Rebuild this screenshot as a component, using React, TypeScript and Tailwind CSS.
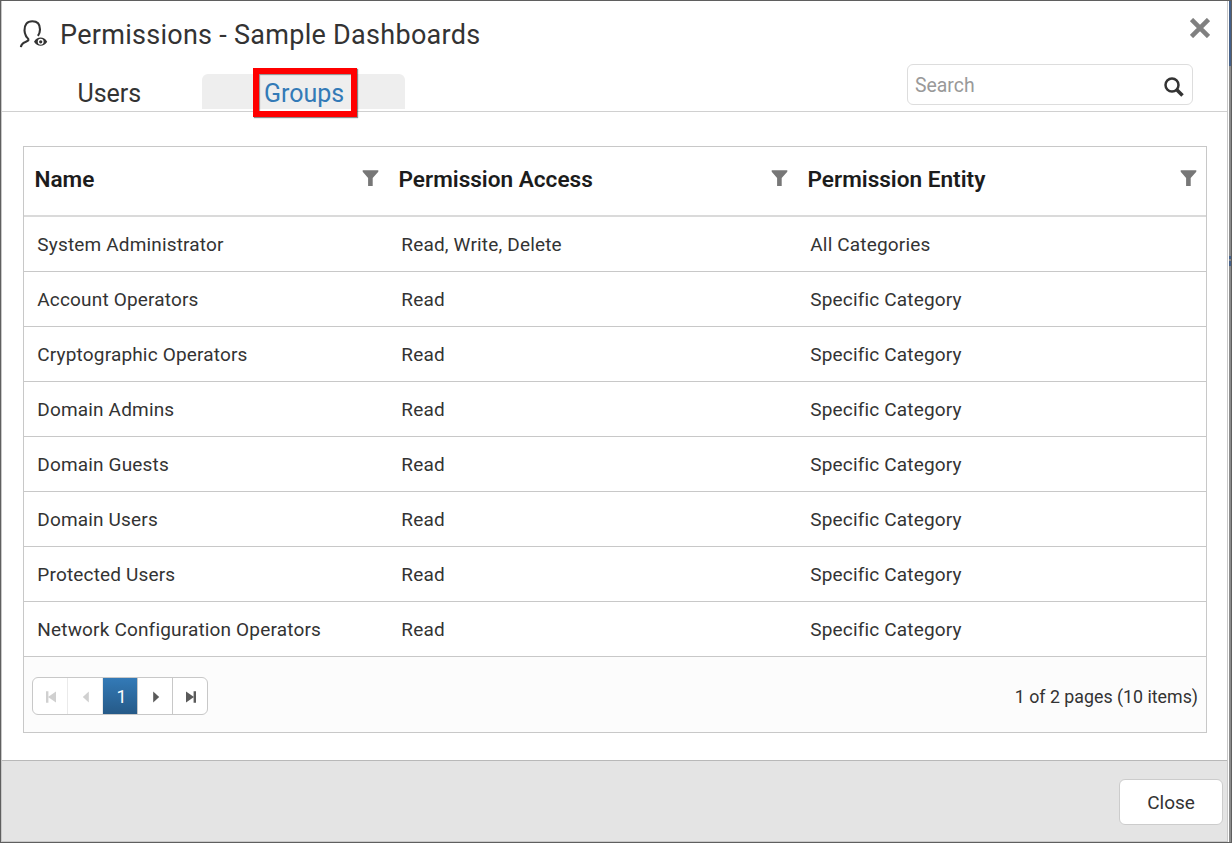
import React from "react";

const rows: [string, string, string][] = [
  ["System Administrator", "Read, Write, Delete", "All Categories"],
  ["Account Operators", "Read", "Specific Category"],
  ["Cryptographic Operators", "Read", "Specific Category"],
  ["Domain Admins", "Read", "Specific Category"],
  ["Domain Guests", "Read", "Specific Category"],
  ["Domain Users", "Read", "Specific Category"],
  ["Protected Users", "Read", "Specific Category"],
  ["Network Configuration Operators", "Read", "Specific Category"],
];

const headers = ["Name", "Permission Access", "Permission Entity"];

function UserEyeIcon() {
  return (
    <svg width="30" height="30" viewBox="0 0 30 30" fill="none" stroke="#333" strokeWidth="2.100">
      <path d="M1.900 28.200c.3-3.200 1.700-4.300 4.600-5.300 2.400-.8 3.300-1.300 2.900-2.600-.3-1.100-1.700-1.700-2.400-3.300-.7-1.500-1.500-3.500-1.500-5.500C5.500 5.500 8 2.300 13.300 2.300s7.700 2.900 7.700 8.200c0 2.400-.8 4.600-2.100 6.400" />
      <path d="M15 22.800c3.200-5.600 10-5.600 13.200 0-3.200 5.400-10 5.400-13.200 0Z" fill="#333" stroke="none" />
      <circle cx="21.700" cy="22.800" r="2.300" stroke="#fff" strokeWidth="1.300" />
    </svg>
  );
}

function FilterIcon() {
  return (
    <svg width="17" height="17" viewBox="0 0 17 17" fill="#777">
      <path d="M.7.3h15.600v1.500L10.700 8v8H6.100V8L.7 1.800Z" />
    </svg>
  );
}

function Arrow({ kind, color }: { kind: "first" | "prev" | "next" | "last"; color: string }) {
  const back = kind === "first" || kind === "prev";
  const bar = kind === "first" || kind === "last";
  return (
    <svg width="12" height="12" viewBox="0 0 12 12" fill={color} className={back ? "mt-[2px] ml-[2px]" : "mt-[2px] ml-[2px] rotate-180"}>
      {bar && <path d="M1 .3h2.400v11.400H1z" />}
      <path d={bar ? "M11 .5v11L3 6Z" : "M8.800.5v11L2.800 6Z"} />
    </svg>
  );
}

export default function App() {
  return (
    <div className="flex h-[843px] w-[1232px] overflow-hidden border border-[#5f5f5f] bg-white font-['Roboto',sans-serif] text-[#333]">
      <div className="flex w-[1227px] flex-col border-x border-b border-[#c8c8c8]">
        <header className="flex h-[111px] shrink-0 justify-between border-b border-[#d0d0d0]">
          <div>
            <div className="flex h-[73px] items-start pt-[18px] pl-[17px]">
              <UserEyeIcon />
              <h1 className="ml-[11px] text-[27px] leading-[32px] tracking-[0.280px]">Permissions - Sample Dashboards</h1>
            </div>
            <nav className="flex h-[35px] text-[25px] leading-[39px]">
              <div className="w-[200px] pl-[75.500px]">Users</div>
              <div className="relative w-[203px] rounded-t-[6px] bg-[#eee] pl-[62px] text-[#337ab7]">
                Groups
                <span className="absolute -top-[6px] left-[51px] h-[49px] w-[104px] border-[6px] border-[#ff0000] shadow-[1px_1px_1px_rgba(0,0,0,0.45),inset_1px_1px_1px_rgba(0,0,0,0.4)]" />
              </div>
            </nav>
          </div>
          <div className="pr-[34px]">
            <div className="flex h-[63px] justify-end pt-[17px]">
              <svg width="20" height="20" viewBox="0 0 20 20" stroke="#808080" strokeWidth="4.600" className="-mr-[17px]">
                <path d="M1.500 1.500l17 17M18.500 1.500l-17 17" />
              </svg>
            </div>
            <div className="flex h-[41px] w-[286px] items-center justify-between rounded-[6px] border border-[#ddd] pr-2 pl-[7px] text-[19.400px] text-[#999]">
              <span className="pt-[3px]">Search</span>
              <svg width="20" height="20" viewBox="0 0 20 20" fill="none" stroke="#333" className="mt-1">
                <circle cx="8" cy="8" r="6.500" strokeWidth="2.500" />
                <path d="M12.500 12.500l6 6" strokeWidth="3.500" />
              </svg>
            </div>
          </div>
        </header>

        <main className="flex-1 pt-[34px] pl-[21px]">
          <div className="h-[587px] w-[1184px] border border-[#c8c8c8]">
            <div className="grid h-[70px] grid-cols-[364px_409px_409px] border-b-2 border-[#dadada]">
              {headers.map((h) => (
                <div key={h} className="flex items-center justify-between pr-[9px] pb-[6px] pl-[10.500px] text-[22.600px] font-semibold text-[#1c1c1c]">
                  <span className="pt-[3px]">{h}</span>
                  <FilterIcon />
                </div>
              ))}
            </div>
            {rows.map((r) => (
              <div key={r[0]} className="grid h-[55px] grid-cols-[364px_409px_409px] items-center border-b border-[#c8c8c8] pt-[2px] text-[19px] tracking-[0.170px]">
                {r.map((c) => (
                  <span key={c} className="pl-[13.300px]">{c}</span>
                ))}
              </div>
            ))}
            <div className="flex h-[75px] items-start justify-between bg-[#fcfcfc] pt-5 pr-2 pl-2">
              <div className="flex h-[38px] w-[176px] overflow-hidden rounded-[6px] border border-[#c8c8c8] bg-white">
                <div className="flex w-[35px] items-center justify-center border-r border-[#eaeaea]"><Arrow kind="first" color="#d0d0d0" /></div>
                <div className="flex w-[35px] items-center justify-center border-r border-[#eaeaea]"><Arrow kind="prev" color="#d0d0d0" /></div>
                <div className="flex w-[34px] items-center justify-center bg-linear-to-b from-[#337ab7] to-[#265a88] pl-[3px] text-[18px] text-white">1</div>
                <div className="flex w-[36px] items-center justify-center border-x border-[#c8c8c8]"><Arrow kind="next" color="#5a5a5a" /></div>
                <div className="flex w-[34px] items-center justify-center"><Arrow kind="last" color="#5a5a5a" /></div>
              </div>
              <span className="text-[17.800px] leading-[40px]">1 of 2 pages (10 items)</span>
            </div>
          </div>
        </main>

        <footer className="flex h-[81px] shrink-0 justify-end border-t border-[#b8b8b8] bg-[#e4e4e4] pt-[18px] pr-1">
          <button className="h-[46px] w-[104px] rounded-[6px] border border-[#ccc] bg-white pt-[2px] text-[19px]">Close</button>
        </footer>
      </div>
      <div className="w-px bg-white" />
      <div className="flex flex-1 flex-col">
        <div className="h-[65px] bg-[#45618a]" />
        <div className="h-[190px] bg-[#8c8c8c]" />
        <div className="h-[3px] bg-[#45618a]" />
        <div className="h-[2px] bg-[#8c8c8c]" />
        <div className="h-[5px] bg-[#45618a]" />
        <div className="flex-1 bg-[#8c8c8c]" />
      </div>
    </div>
  );
}
